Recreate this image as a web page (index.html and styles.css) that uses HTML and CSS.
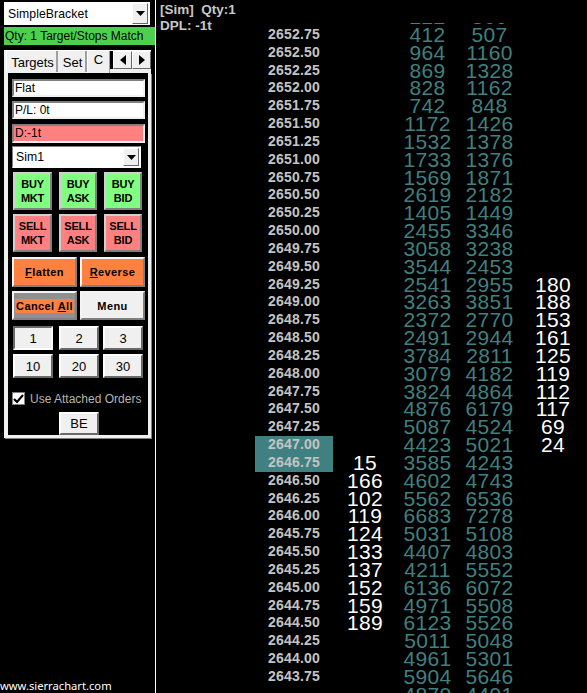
FILE: index.html
```html
<!DOCTYPE html>
<html lang="en">
<head>
<meta charset="utf-8">
<title>SimpleBracket DOM</title>
<link rel="stylesheet" href="styles.css">
</head>
<body>
<div class="app">
  <aside class="side">
    <div class="combo combo-top"><span class="combo-text">SimpleBracket</span><span class="combo-btn"><svg width="9" height="5" viewBox="0 0 9 5"><path d="M0 0h9L4.500 5z" fill="#000"/></svg></span></div>
    <div class="status">Qty: 1 Target/Stops Match</div>
    <div class="tabs">
      <span class="tab tab-t">Targets</span>
      <span class="tab tab-s">Set</span>
      <span class="tab tab-c">C</span>
      <span class="tab-gap"></span>
      <span class="arrow"><svg width="6" height="10" viewBox="0 0 6 10"><path d="M6 0v10L0 5z" fill="#000"/></svg></span>
      <span class="arrow"><svg width="6" height="10" viewBox="0 0 6 10"><path d="M0 0v10l6-5z" fill="#000"/></svg></span>
    </div>
    <div class="panel">
      <div class="field field-flat">Flat</div>
      <div class="field field-pl">P/L: 0t</div>
      <div class="field field-red">D:-1t</div>
      <div class="combo combo-sim"><span class="combo-text">Sim1</span><span class="combo-btn"><svg width="9" height="5" viewBox="0 0 9 5"><path d="M0 0h9L4.500 5z" fill="#000"/></svg></span></div>
      <div class="trade-row">
        <div class="tbtn buy">BUY<br>MKT</div><div class="tbtn buy">BUY<br>ASK</div><div class="tbtn buy">BUY<br>BID</div>
      </div>
      <div class="trade-row">
        <div class="tbtn sell">SELL<br>MKT</div><div class="tbtn sell">SELL<br>ASK</div><div class="tbtn sell">SELL<br>BID</div>
      </div>
      <div class="wide-row wide-first">
        <div class="wbtn orange"><span><u>F</u>latten</span></div>
        <div class="wbtn orange"><span><u>R</u>everse</span></div>
      </div>
      <div class="wide-row wide-second">
        <div class="wbtn cancel"><span class="cancel-text">Cancel <u>A</u>ll</span></div>
        <div class="wbtn menu">Menu</div>
      </div>
      <div class="qty-grid">
        <div class="qbtn qbtn-on">1</div><div class="qbtn">2</div><div class="qbtn">3</div>
        <div class="qbtn">10</div><div class="qbtn">20</div><div class="qbtn">30</div>
      </div>
      <div class="check-row">
        <span class="check"><svg width="11" height="10" viewBox="0 0 11 10"><path d="M1 5l3 3 6-7" fill="none" stroke="#000" stroke-width="2.200"/></svg></span>
        <span class="check-label">Use Attached Orders</span>
      </div>
      <div class="be-row"><div class="qbtn be">BE</div></div>
    </div>
    <div class="site">www.sierrachart.com</div>
  </aside>
  <main class="chart">
    <div class="info"><div>[Sim]&nbsp; Qty:1</div><div>DPL: -1t</div></div>
    <div class="ladder" id="ladder"></div>
  </main>
</div>
<script src="ladder.js"></script>
</body>
</html>
```
FILE: ladder.js
```js
var rows = [
["","","222","360",""],
["2652.75","","412","507",""],["2652.50","","964","1160",""],["2652.25","","869","1328",""],["2652.00","","828","1162",""],
["2651.75","","742","848",""],["2651.50","","1172","1426",""],["2651.25","","1532","1378",""],["2651.00","","1733","1376",""],
["2650.75","","1569","1871",""],["2650.50","","2619","2182",""],["2650.25","","1405","1449",""],["2650.00","","2455","3346",""],
["2649.75","","3058","3238",""],["2649.50","","3544","2453",""],["2649.25","","2541","2955","180"],["2649.00","","3263","3851","188"],
["2648.75","","2372","2770","153"],["2648.50","","2491","2944","161"],["2648.25","","3784","2811","125"],["2648.00","","3079","4182","119"],
["2647.75","","3824","4864","112"],["2647.50","","4876","6179","117"],["2647.25","","5087","4524","69"],["2647.00","","4423","5021","24"],
["2646.75","15","3585","4243",""],["2646.50","166","4602","4743",""],["2646.25","102","5562","6536",""],["2646.00","119","6683","7278",""],
["2645.75","124","5031","5108",""],["2645.50","133","4407","4803",""],["2645.25","137","4211","5552",""],["2645.00","152","6136","6072",""],
["2644.75","159","4971","5508",""],["2644.50","189","6123","5526",""],["2644.25","","5011","5048",""],["2644.00","","4961","5301",""],
["2643.75","","5904","5646",""],["","","4870","4491",""]
];
var cls = ["price","bid","vol","vol","ask"];
var host = document.getElementById("ladder");
rows.forEach(function (r) {
  var row = document.createElement("div");
  row.className = "row";
  r.forEach(function (t, i) {
    var c = document.createElement("div");
    c.className = "cell " + cls[i];
    if (i === 0 && (t === "2647.00" || t === "2646.75")) c.className += " current";
    c.textContent = t;
    row.appendChild(c);
  });
  host.appendChild(row);
});
```
FILE: styles.css
```css
* { box-sizing: border-box; }
html, body { margin: 0; height: 100%; background: #000; overflow: hidden; }
body { font-family: "Liberation Sans", Arial, sans-serif; }
.app { display: flex; width: 587px; height: 693px; background: #000; }

.side { position: relative; width: 156px; height: 693px; flex: none; border-right: 1px solid #fff; padding: 2px 0 0 4px; font-size: 12px; color: #000; }
.combo { display: flex; align-items: center; background: #fff; padding: 1px 2px 1px 0; }
.combo-top { width: 146px; height: 23px; }
.combo-text { flex: 1; padding-left: 4px; font-size: 12.200px; letter-spacing: .1px; }
.combo-btn { width: 16px; height: 100%; display: flex; align-items: center; justify-content: center; background: #f0f0f0; border: 1px solid; border-color: #fff #696969 #696969 #fff; }
.status { width: 151px; height: 18px; margin-top: 2px; background: #4dd04d; font-size: 12px; line-height: 18px; padding-left: 1px; white-space: nowrap; }

.tabs { display: flex; align-items: flex-start; width: 147px; height: 23px; margin-top: 5px; background: #f0f0f0; border-top: 1px solid #fff; padding-left: 2px; }
.tab { display: block; height: 21px; background: #f0f0f0; font-size: 13px; border-right: 2px solid #a0a0a0; line-height: 24px; text-align: center; }
.tab-t { width: 52px; border-left: 1px solid #fff; padding-left: 2px; }
.tab-s { width: 29px; padding-left: 2px; }
.tab-c { width: 23px; height: 22px; border-right: 1px solid #a0a0a0; border-left: 1px solid #fff; line-height: 18px; }
.tab-gap { width: 3px; height: 18px; background: #000; }
.arrow { display: flex; align-items: center; justify-content: center; width: 19px; height: 18px; background: #f0f0f0; border: 1px solid; border-color: #fff #696969 #696969 #fff; }

.panel { width: 147px; height: 365px; border: solid #f0f0f0; border-width: 0 3px 3px 4px; background: #000; padding: 6px 0 0 4px; box-shadow: 1px 1px 0 #808080; display: flex; flex-direction: column; }
.field { width: 133px; background: #fff; border: 2px solid; border-color: #808080 #f0f0f0 #f0f0f0 #808080; font-size: 12px; line-height: 14px; padding-left: 1px; flex: none; }
.field-flat { height: 18px; margin-bottom: 4px; }
.field-pl { height: 18px; margin-bottom: 5px; }
.field-red { height: 19px; background: #ff8080; margin-bottom: 3px; }
.combo-sim { width: 129px; height: 22px; flex: none; border: 1px solid; border-color: #808080 #fff #fff #808080; padding: 1px 1px 1px 0; }
.combo-sim .combo-text { padding-left: 3px; }

.trade-row { display: grid; grid-template-columns: 39px 38px 38px; column-gap: 7px; margin-top: 4px; padding-left: 1px; }
.tbtn { height: 38px; border: 2px solid; font-size: 11px; font-weight: bold; line-height: 14px; text-align: center; padding-top: 3px; color: #000; letter-spacing: -.2px; }
.buy { background: #80ff80; border-color: #d0d0d0 #808080 #808080 #d0d0d0; }
.sell { background: #ff8080; border-color: #d0d0d0 #808080 #808080 #d0d0d0; }

.wide-row { display: flex; gap: 3px; }
.wide-first { margin-top: 5px; }
.wide-second { margin-top: 4px; }
.wbtn { width: 65px; height: 30px; border: 2px solid; border-color: #f4f4f4 #808080 #808080 #f4f4f4; display: flex; align-items: center; justify-content: center; font-size: 11px; font-weight: bold; letter-spacing: .4px; white-space: nowrap; }
.wide-second .wbtn { height: 29px; }
.orange { background: #ff8040; }
.cancel { background: #909090; }
.cancel-text { background: #ff8040; line-height: 14px; padding: 0 1px; }
.menu { background: #f0f0f0; }

.qty-grid { display: grid; grid-template-columns: 46px 44px 40px; grid-auto-rows: 24px; row-gap: 4px; margin-top: 6px; padding-left: 1px; }
.qbtn { width: 40px; background: #f0f0f0; border: 2px solid; border-color: #fff #696969 #696969 #fff; font-size: 13px; display: flex; align-items: center; justify-content: center; }
.qbtn-on { border-color: #696969 #fff #fff #696969; }

.check-row { display: flex; align-items: center; margin-top: 14px; height: 13px; flex: none; }
.check { width: 13px; height: 13px; background: #fff; border: 1px solid #808080; display: flex; align-items: center; justify-content: center; }
.check-label { margin-left: 5px; color: #b4b4b4; font-size: 12px; white-space: nowrap; }
.be-row { margin-top: 7px; padding-left: 47px; }
.be { height: 23px; }

.site { position: absolute; left: 0; top: 679px; color: #fff; font-family: "Noto Sans", sans-serif; font-size: 11.200px; line-height: 14px; white-space: nowrap; }

.chart { position: relative; flex: 1; height: 693px; overflow: hidden; }
.info { position: absolute; left: 4px; top: 2px; color: #c8c8c8; font-size: 13.500px; font-weight: bold; line-height: 16px; }
.ladder { position: absolute; left: 0; right: 0; top: 23px; bottom: 0; overflow: hidden; }
.row { display: grid; grid-template-columns: 78px 64px 61px 63px 64px; padding-left: 99px; height: 17.830px; }
.row:first-child { margin-top: -14.830px; }
.cell { line-height: 17.830px; white-space: nowrap; text-align: center; font-size: 21px; letter-spacing: .32px; }
.price { text-align: right; padding-right: 13px; color: #c4c4c4; font-size: 14px; font-weight: bold; letter-spacing: .2px; }
.current { background: #408080; }
.bid, .ask { color: #fff; }
.vol { color: #408080; }
```
